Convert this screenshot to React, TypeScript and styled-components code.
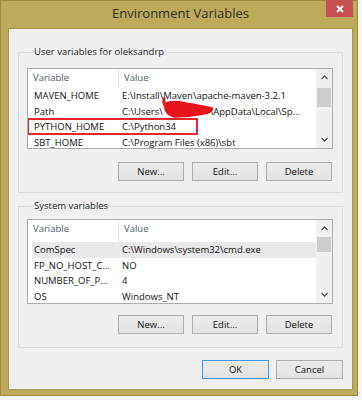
import React from "react";
import styled, { createGlobalStyle } from "styled-components";

const GlobalStyle = createGlobalStyle`
  body {
    margin: 0;
    background: #f5f5f5;
    font-family: "Open Sans", "Noto Sans", sans-serif;
  }
`;

// Window chrome
const Window = styled.div`
  box-sizing: border-box;
  width: 358px;
  height: 396px;
  background: #bdab5a;
  border: 1px solid #9d8b3f;
  padding: 0 4px 5px 7px;
  display: flex;
  flex-direction: column;
`;

const TitleBar = styled.div`
  height: 27px;
  display: grid;
  grid-template-columns: 1fr auto 1fr;
  align-items: start;
`;

const Title = styled.div`
  grid-column: 2;
  font-size: 13px;
  line-height: 25px;
  color: #2e2e2e;
`;

const CloseButton = styled.div`
  grid-column: 3;
  justify-self: end;
  margin-top: -1px;
  width: 27px;
  height: 17px;
  background: #c75050;
  display: flex;
  align-items: center;
  justify-content: center;
`;

const Content = styled.div`
  flex: 1;
  background: #f0f0f0;
  border: 1px solid #a8974c;
  padding: 16px 9px 0;
  display: flex;
  flex-direction: column;
`;

// Group box
const Group = styled.fieldset<{ $padTop: number; $padBottom: number; $gap?: number }>`
  margin: ${(p) => p.$gap ?? 0}px 0 0;
  padding: ${(p) => p.$padTop}px 9px ${(p) => p.$padBottom}px 8px;
  border: 1px solid #dcdcdc;
  min-width: 0;
`;

const Legend = styled.legend`
  margin-left: 5px;
  padding: 0 2px;
  font-size: 9.5px;
  line-height: 14px;
  color: #1e1e1e;
`;

// List view
const ListView = styled.div<{ $height: number }>`
  position: relative;
  box-sizing: border-box;
  height: ${(p) => p.$height}px;
  border: 1px solid #abadb3;
  background: #fff;
  display: flex;
`;

const Table = styled.div`
  flex: 1;
  overflow: hidden;
  font-size: 9.5px;
`;

const HeaderRow = styled.div<{ $height: number }>`
  height: ${(p) => p.$height}px;
  display: flex;
  color: #4f5a66;
`;

const HeaderCell = styled.div<{ $first?: boolean }>`
  box-sizing: border-box;
  width: ${(p) => (p.$first ? "91px" : "auto")};
  flex: ${(p) => (p.$first ? "none" : "1")};
  padding: 2px 0 0 5px;
  border-right: ${(p) => (p.$first ? "1px solid #e5e5e5" : "none")};
  line-height: 14px;
`;

const Row = styled.div<{ $selected?: boolean; $marked?: boolean }>`
  position: relative;
  height: 15.5px;
  margin-left: 4px;
  display: flex;
  align-items: center;
  color: #111;
  background: ${(p) => (p.$selected ? "#e9e9e9" : "transparent")};
  white-space: nowrap;

  &::after {
    content: "";
    display: ${(p) => (p.$marked ? "block" : "none")};
    position: absolute;
    left: -5px;
    top: -1px;
    width: 171px;
    height: 17px;
    box-sizing: border-box;
    border: 2px solid #e2282c;
  }
`;

const NameCell = styled.div`
  box-sizing: border-box;
  width: 87px;
  padding-left: 2px;
`;

const ValueCell = styled.div`
  flex: 1;
  padding-left: 3px;
`;

const Blank = styled.span<{ $width: number }>`
  display: inline-block;
  width: ${(p) => p.$width}px;
`;

const ScrollBar = styled.div`
  width: 16px;
  background: #f0f0f0;
  display: flex;
  flex-direction: column;
`;

const ArrowButton = styled.div`
  height: 17px;
  display: flex;
  align-items: center;
  justify-content: center;
`;

const Track = styled.div`
  flex: 1;
  display: flex;
  flex-direction: column;
  align-items: center;
`;

const Thumb = styled.div<{ $offset: number; $size: number }>`
  margin-top: ${(p) => p.$offset}px;
  width: 14px;
  height: ${(p) => p.$size}px;
  background: #cdcdcd;
`;

// hand-drawn redaction over the user name
const Scribble = styled.svg`
  position: absolute;
  left: 132px;
  top: 26px;
  overflow: visible;
`;

// Buttons
const ButtonRow = styled.div<{ $top: number }>`
  margin-top: ${(p) => p.$top}px;
  display: flex;
  justify-content: flex-end;
  gap: 8px;
  padding-right: 1px;
`;

const Button = styled.div<{ $wide?: boolean; $focused?: boolean }>`
  box-sizing: border-box;
  width: ${(p) => (p.$wide ? 67 : 66)}px;
  height: 19px;
  border: 1px solid ${(p) => (p.$focused ? "#3d9be9" : "#adadad")};
  background: linear-gradient(#ececec, #e2e2e2);
  display: flex;
  align-items: center;
  justify-content: center;
  font-size: 9.5px;
  color: #111;
`;

const Footer = styled.div`
  margin-top: 12px;
  display: flex;
  justify-content: flex-end;
  gap: 7px;
`;

type Variable = {
  name: string;
  value: React.ReactNode;
  selected?: boolean;
  marked?: boolean;
};

const userVars: Variable[] = [
  { name: "MAVEN_HOME", value: "E:\\Install\\Maven\\apache-maven-3.2.1" },
  {
    name: "Path",
    value: (
      <>
        C:\Users\<Blank $width={47} />\AppData\Local\Sp...
      </>
    ),
  },
  { name: "PYTHON_HOME", value: "C:\\Python34", marked: true },
  { name: "SBT_HOME", value: "C:\\Program Files (x86)\\sbt" },
];

const systemVars: Variable[] = [
  { name: "ComSpec", value: "C:\\Windows\\system32\\cmd.exe", selected: true },
  { name: "FP_NO_HOST_C...", value: "NO" },
  { name: "NUMBER_OF_P...", value: "4" },
  { name: "OS", value: "Windows_NT" },
];

const Chevron = ({ up }: { up?: boolean }) => (
  <svg width="7" height="5" viewBox="0 0 7 5">
    <polyline
      points={up ? "0.5,4 3.5,1 6.5,4" : "0.5,1 3.5,4 6.5,1"}
      fill="none"
      stroke="#555"
      strokeWidth="1.3"
    />
  </svg>
);

const VariableList = ({
  rows,
  height,
  headerHeight,
  thumbOffset,
  thumbSize,
  redacted,
}: {
  rows: Variable[];
  height: number;
  headerHeight: number;
  thumbOffset: number;
  thumbSize: number;
  redacted?: boolean;
}) => (
  <ListView $height={height}>
    <Table>
      <HeaderRow $height={headerHeight}>
        <HeaderCell $first>Variable</HeaderCell>
        <HeaderCell>Value</HeaderCell>
      </HeaderRow>
      {rows.map((row) => (
        <Row key={row.name} $selected={row.selected} $marked={row.marked}>
          <NameCell>{row.name}</NameCell>
          <ValueCell>{row.value}</ValueCell>
        </Row>
      ))}
    </Table>
    <ScrollBar>
      <ArrowButton>
        <Chevron up />
      </ArrowButton>
      <Track>
        <Thumb $offset={thumbOffset} $size={thumbSize} />
      </Track>
      <ArrowButton>
        <Chevron />
      </ArrowButton>
    </ScrollBar>
    {redacted && (
      <Scribble width="56" height="26" viewBox="0 0 56 26">
        <path d="M4 4 Q3 9 7 13" stroke="#e8141c" strokeWidth="3" fill="none" strokeLinecap="round" />
        <path
          d="M5 9 C8 6 16 6 26 8 C36 10 46 11 52 13 C54 15 50 18 44 19 C34 21 24 22 15 22 C10 21 6 18 5 14 Z"
          fill="#e8141c"
          stroke="#e8141c"
          strokeWidth="1.5"
          strokeLinejoin="round"
        />
      </Scribble>
    )}
  </ListView>
);

export default function App() {
  return (
    <>
      <GlobalStyle />
      <Window>
        <TitleBar>
          <Title>Environment Variables</Title>
          <CloseButton>
            <svg width="8" height="8" viewBox="0 0 8 8">
              <path d="M1 1 L7 7 M7 1 L1 7" stroke="#fff" strokeWidth="1.8" />
            </svg>
          </CloseButton>
        </TitleBar>
        <Content>
          <Group $padTop={9} $padBottom={11}>
            <Legend>User variables for oleksandrp</Legend>
            <VariableList
              rows={userVars}
              height={81}
              headerHeight={19}
              thumbOffset={2}
              thumbSize={19}
              redacted
            />
            <ButtonRow $top={13}>
              <Button>New...</Button>
              <Button>Edit...</Button>
              <Button>Delete</Button>
            </ButtonRow>
          </Group>
          <Group $padTop={6} $padBottom={13} $gap={6}>
            <Legend>System variables</Legend>
            <VariableList
              rows={systemVars}
              height={85}
              headerHeight={22}
              thumbOffset={0}
              thumbSize={15}
            />
            <ButtonRow $top={11}>
              <Button>New...</Button>
              <Button>Edit...</Button>
              <Button>Delete</Button>
            </ButtonRow>
          </Group>
          <Footer>
            <Button $wide $focused>
              OK
            </Button>
            <Button $wide>Cancel</Button>
          </Footer>
        </Content>
      </Window>
    </>
  );
}
